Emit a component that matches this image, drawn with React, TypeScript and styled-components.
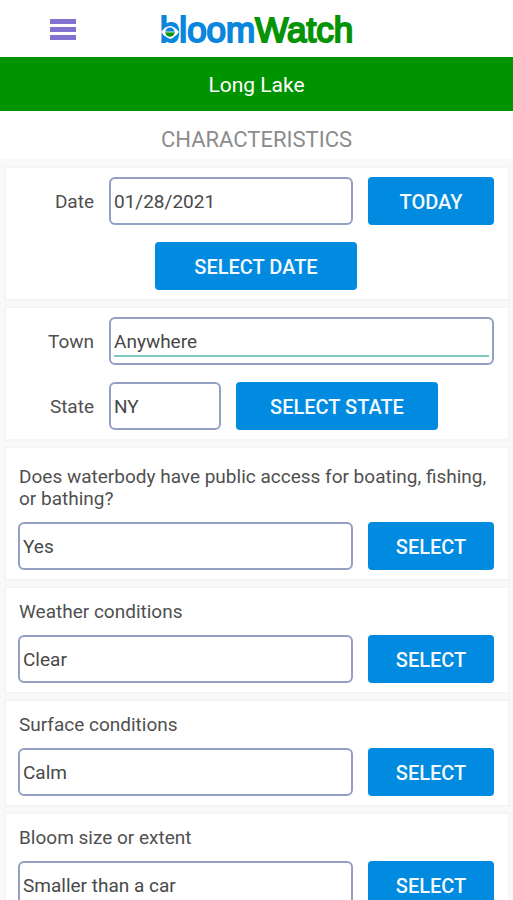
import React, { useId, useState } from "react";
import styled, { createGlobalStyle } from "styled-components";

const GlobalStyle = createGlobalStyle`
  *, *::before, *::after { box-sizing: border-box; }
  body {
    margin: 0;
    background: #f9f9f9;
    color: #505050;
    font-family: Roboto, "Liberation Sans", sans-serif;
    font-size: 19px;
    line-height: 22px;
  }
`;

const Page = styled.div`
  display: flex;
  flex-direction: column;
`;

const TopBar = styled.header`
  display: grid;
  grid-template-columns: 1fr auto 1fr;
  align-items: center;
  height: 57px;
  padding: 2px 50px 0;
  background: #fff;
`;

const MenuButton = styled.button`
  display: flex;
  justify-self: start;
  padding: 0;
  border: 0;
  background: none;
  cursor: pointer;
`;

const Logo = styled.h1`
  position: relative;
  margin: 0;
  font-family: "Liberation Sans", Arial, sans-serif;
  font-size: 35px;
  line-height: 55px;
  font-weight: 400;
  color: #0a87dc;
  -webkit-text-stroke: 2px currentColor;
`;

const LogoAccent = styled.span`
  color: #069306;
`;

const LogoEye = styled.svg`
  position: absolute;
  left: 0;
  top: 20px;
`;

const LakeBar = styled.div`
  padding: 17px 16px 15px;
  background: #009300;
  color: #fff;
  font-size: 21px;
  text-align: center;
`;

const SectionTitle = styled.h2`
  margin: 0;
  padding: 18px 16px 8px;
  background: #fff;
  color: #8c8c8c;
  font-size: 22px;
  font-weight: 400;
  text-align: center;
`;

const Form = styled.form`
  display: flex;
  flex-direction: column;
  gap: 9px;
  padding: 9px 5px 9px 6px;
`;

const Card = styled.section`
  display: flex;
  flex-direction: column;
  gap: 17px;
  padding: 9px 14px 9px 12px;
  background: #fff;
  box-shadow: 0 0 0 2px #f5f5f5;
`;

const QuestionCard = styled(Card)<{ $long?: boolean }>`
  gap: 12px;
  padding-top: ${(p) => (p.$long ? 18 : 13)}px;
`;

const Row = styled.div<{ $center?: boolean }>`
  display: flex;
  align-items: center;
  justify-content: ${(p) => (p.$center ? "center" : "flex-start")};
  gap: 15px;
`;

const FieldLabel = styled.label`
  flex: 0 0 76px;
  padding-top: 2px;
  text-align: right;
`;

const QuestionLabel = styled.label`
  padding-left: 1px;
`;

const Field = styled.span<{ $width?: number; $focused?: boolean }>`
  display: flex;
  flex: ${(p) => (p.$width ? `0 0 ${p.$width}px` : "1 1 0")};
  min-width: 0;
  height: 48px;
  padding: 10px 3px 6px;
  border: 2px solid #949fc4;
  border-radius: 6px;
  background: #fff;

  input {
    border-bottom: 2px solid ${(p) => (p.$focused ? "#7fcabb" : "transparent")};
  }
`;

const TextInput = styled.input`
  width: 100%;
  min-width: 0;
  padding: 0;
  border: 0;
  outline: 0;
  background: none;
  color: #484848;
  font: inherit;
`;

const Button = styled.button<{ $wide?: boolean }>`
  flex: 0 0 ${(p) => (p.$wide ? 202 : 126)}px;
  height: 48px;
  padding: 2px 0 0;
  border: 0;
  border-radius: 4px;
  background: #008be0;
  color: #f4faff;
  font: inherit;
  font-size: 20px;
  font-weight: 500;
  cursor: pointer;
`;

const questions = [
  {
    label: "Does waterbody have public access for boating, fishing, or bathing?",
    value: "Yes",
    long: true,
  },
  { label: "Weather conditions", value: "Clear" },
  { label: "Surface conditions", value: "Calm" },
  { label: "Bloom size or extent", value: "Smaller than a car" },
];

function MenuIcon() {
  return (
    <svg width="26" height="21" viewBox="0 0 26 21" fill="#8272d0" aria-hidden="true">
      <rect y="0" width="26" height="5" />
      <rect y="8" width="26" height="5" />
      <rect y="16" width="26" height="5" />
    </svg>
  );
}

function EyeIcon() {
  return (
    <LogoEye width="20" height="20" viewBox="0 0 20 20" aria-hidden="true">
      <path d="M1 10Q10 -2 19 10Q10 22 1 10Z" fill="#fff" />
      <circle cx="10" cy="10" r="4.5" fill="#0a87dc" />
      <path d="M5.5 10H14.5A4.5 4.5 0 0 1 5.5 10Z" fill="#069306" />
      <path d="M6 10H14" stroke="#d4ecd8" strokeWidth="1" />
    </LogoEye>
  );
}

function Question({ label, value, long }: { label: string; value: string; long?: boolean }) {
  const id = useId();
  const [answer, setAnswer] = useState(value);
  return (
    <QuestionCard $long={long}>
      <QuestionLabel htmlFor={id}>{label}</QuestionLabel>
      <Row>
        <Field>
          <TextInput id={id} value={answer} onChange={(e) => setAnswer(e.target.value)} />
        </Field>
        <Button type="button">SELECT</Button>
      </Row>
    </QuestionCard>
  );
}

export default function App() {
  return (
    <Page>
      <GlobalStyle />
      <TopBar>
        <MenuButton type="button" aria-label="Menu">
          <MenuIcon />
        </MenuButton>
        <Logo>
          bloom<LogoAccent>Watch</LogoAccent>
          <EyeIcon />
        </Logo>
      </TopBar>
      <LakeBar>Long Lake</LakeBar>
      <SectionTitle>CHARACTERISTICS</SectionTitle>
      <Form>
        <Card>
          <Row>
            <FieldLabel htmlFor="date">Date</FieldLabel>
            <Field>
              <TextInput id="date" defaultValue="01/28/2021" />
            </Field>
            <Button type="button">TODAY</Button>
          </Row>
          <Row $center>
            <Button type="button" $wide>SELECT DATE</Button>
          </Row>
        </Card>
        <Card>
          <Row>
            <FieldLabel htmlFor="town">Town</FieldLabel>
            <Field $focused>
              <TextInput id="town" defaultValue="Anywhere" />
            </Field>
          </Row>
          <Row>
            <FieldLabel htmlFor="state">State</FieldLabel>
            <Field $width={112}>
              <TextInput id="state" defaultValue="NY" />
            </Field>
            <Button type="button" $wide>SELECT STATE</Button>
          </Row>
        </Card>
        {questions.map((q) => (
          <Question key={q.label} {...q} />
        ))}
      </Form>
    </Page>
  );
}
